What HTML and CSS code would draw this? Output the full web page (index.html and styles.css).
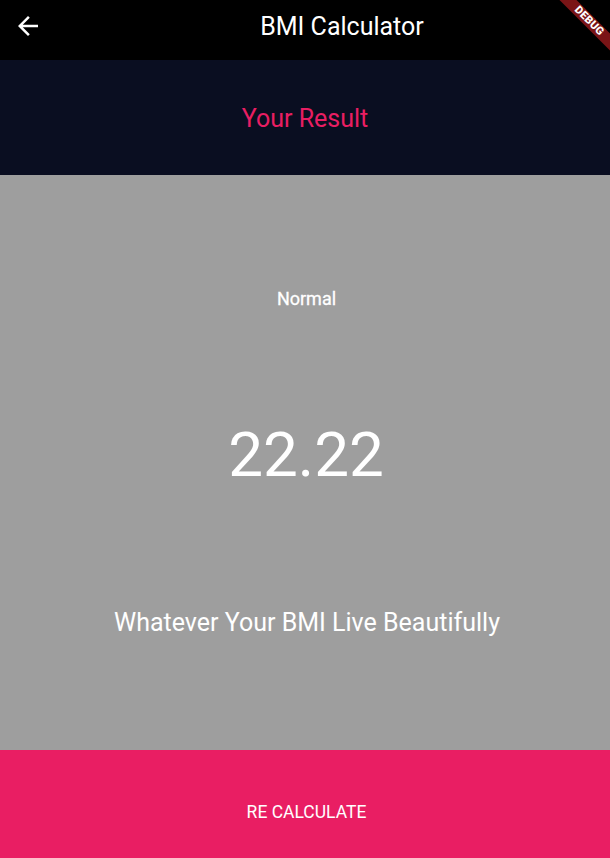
FILE: index.html
```html
<!DOCTYPE html>
<html>
<head>
<meta charset="utf-8">
<link rel="stylesheet" href="styles.css">
</head>
<body>
<div class="app">
  <header class="appbar">
    <button class="back" aria-label="Back">
      <svg viewBox="0 0 24 24" width="30" height="30"><path fill="#fff" d="M20 11H7.83l5.59-5.59L12 4l-8 8 8 8 1.41-1.41L7.83 13H20v-2z"/></svg>
    </button>
    <h1 class="title">BMI Calculator</h1>
  </header>
  <section class="result-head">
    <h2 class="result-title">Your Result</h2>
  </section>
  <main class="result-card">
    <p class="status">Normal</p>
    <p class="bmi">22.22</p>
    <p class="message">Whatever Your BMI Live Beautifully</p>
  </main>
  <footer class="recalc">RE CALCULATE</footer>
  <div class="debug-banner">DEBUG</div>
</div>
</body>
</html>
```
FILE: styles.css
```css
* { box-sizing: border-box; }
html, body { margin: 0; padding: 0; }
body {
  font-family: Roboto, "Noto Sans", sans-serif;
  background: #9e9e9e;
  width: 610px;
  height: 858px;
  overflow: hidden;
}
.app {
  position: relative;
  display: flex;
  flex-direction: column;
  height: 858px;
  overflow: hidden;
}
.appbar {
  height: 60px;
  background: #000;
  display: flex;
  justify-content: center;
  padding-top: 12px;
  padding-left: 74px;
  position: relative;
}
.back {
  position: absolute;
  left: 13px;
  top: 11px;
  width: 30px;
  height: 30px;
  padding: 0;
  border: 0;
  background: none;
  display: flex;
}
.title {
  margin: 0;
  font-size: 25px;
  font-weight: 400;
  line-height: 30px;
  color: #fff;
}
.result-head {
  height: 115px;
  background: #0a0e21;
  display: flex;
  align-items: center;
  justify-content: center;
  padding-top: 2px;
}
.result-title {
  margin: 0;
  font-size: 25px;
  font-weight: 400;
  color: #e91e63;
}
.result-card {
  height: 575px;
  background: #9e9e9e;
  display: flex;
  flex-direction: column;
  justify-content: space-evenly;
  align-items: center;
  color: #fff;
}
.result-card p { margin: 0; }
.status {
  font-size: 18px;
  font-weight: 400;
  -webkit-text-stroke: 0.3px #fff;
  padding-left: 3px;
}
.bmi {
  font-size: 62px;
  font-weight: 400;
  padding-left: 2px;
  margin-top: -4px !important;
}
.message {
  font-size: 25px;
  font-weight: 400;
  padding-left: 4px;
  margin-top: 4px !important;
}
.recalc {
  flex: 1;
  background: #e91e63;
  color: #fff;
  font-size: 17.5px;
  text-align: center;
  padding-top: 52px;
  padding-left: 3px;
}
.debug-banner {
  position: absolute;
  left: 548px;
  top: 15px;
  width: 82px;
  height: 12px;
  background: #7a1416;
  color: #fff;
  font-size: 11px;
  font-weight: 900;
  line-height: 12px;
  text-align: center;
  letter-spacing: 0.3px;
  transform: rotate(45deg);
}
```
